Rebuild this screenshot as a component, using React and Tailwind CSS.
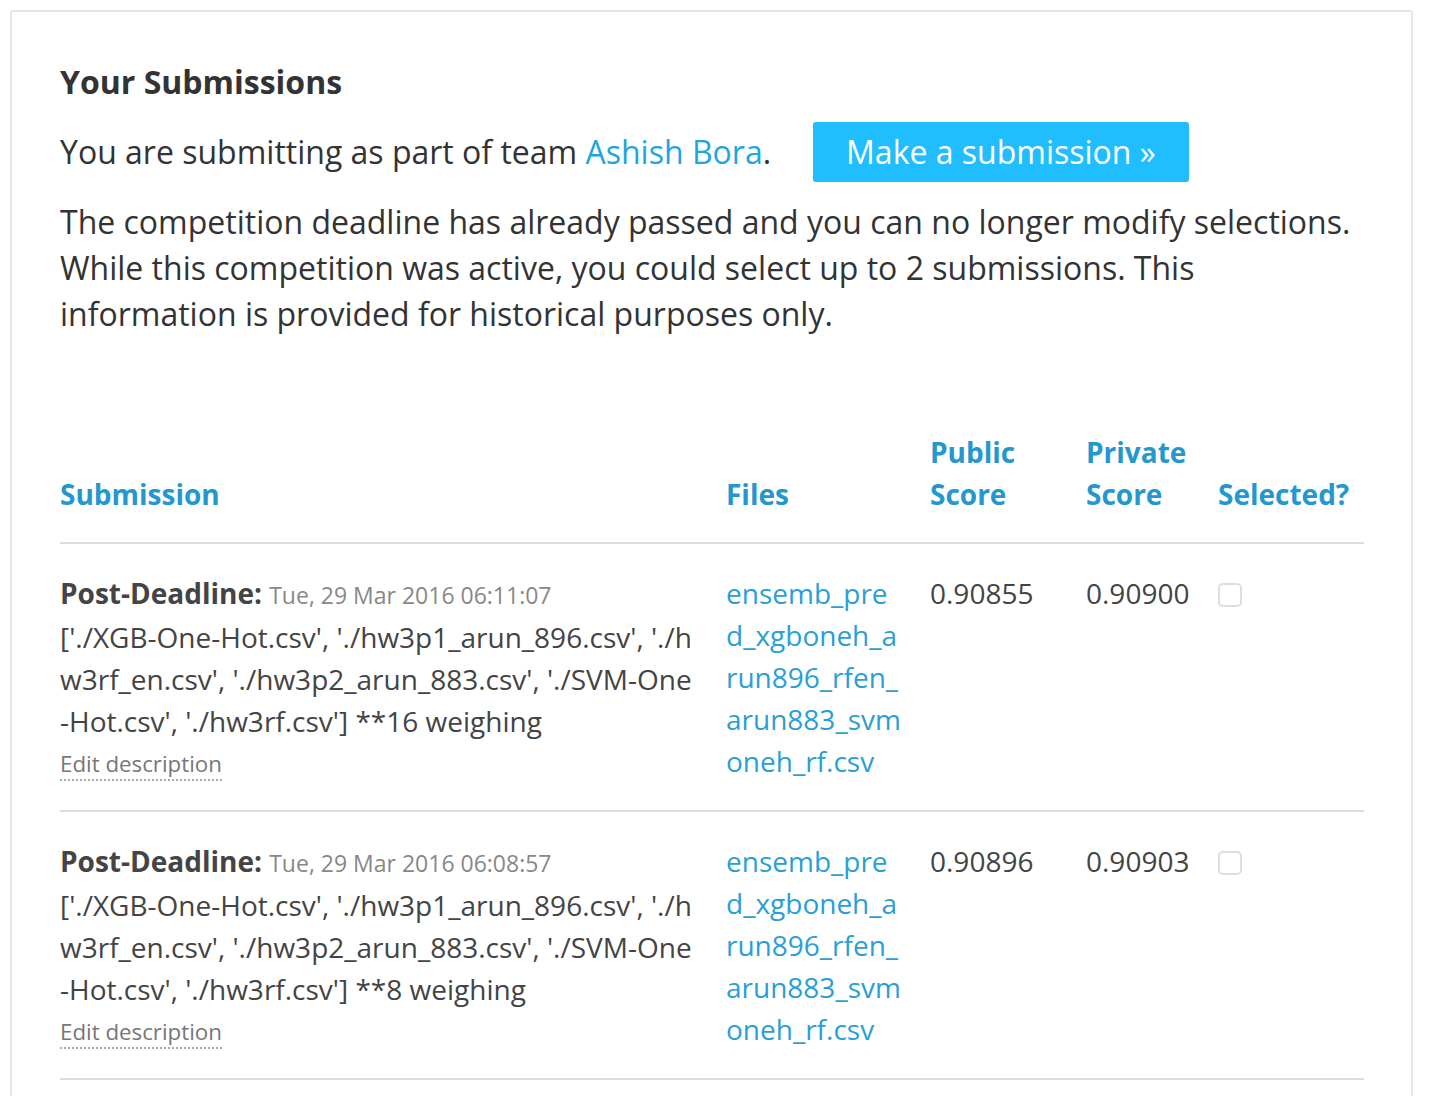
import React from 'react';

// Daftar submission (data statis dari screenshot)
const submissions = [
  {
    date: 'Tue, 29 Mar 2016 06:11:07',
    desc: "['./XGB-One-Hot.csv', './hw3p1_arun_896.csv', './hw3rf_en.csv', './hw3p2_arun_883.csv', './SVM-One-Hot.csv', './hw3rf.csv'] **16 weighing",
    file: 'ensemb_pred_xgboneh_arun896_rfen_arun883_svmoneh_rf.csv',
    pub: '0.90855',
    priv: '0.90900',
  },
  {
    date: 'Tue, 29 Mar 2016 06:08:57',
    desc: "['./XGB-One-Hot.csv', './hw3p1_arun_896.csv', './hw3rf_en.csv', './hw3p2_arun_883.csv', './SVM-One-Hot.csv', './hw3rf.csv'] **8 weighing",
    file: 'ensemb_pred_xgboneh_arun896_rfen_arun883_svmoneh_rf.csv',
    pub: '0.90896',
    priv: '0.90903',
  },
];

const cols = 'grid grid-cols-[666px_204px_156px_132px_146px]';

export default function App() {
  return (
    <div className="min-h-[1096px] bg-white pl-[10px] pt-[10px] font-['Open_Sans',sans-serif] text-[#333]">
      <div className="w-[1403px] min-h-[1200px] rounded-[3px] border-2 border-[#e6e6e6] pl-[48px] pr-[46px] pt-[50px]">
        <h2 className="text-[32px] font-bold leading-[40px] text-[#333]">Your Submissions</h2>

        <div className="mt-[20px] flex items-center">
          <p className="text-[32px] leading-[46px]">
            You are submitting as part of team{' '}
            <a className="text-[#1ea6e0]">Ashish Bora</a>.
          </p>
          <button className="ml-[42px] h-[60px] rounded-[3px] bg-[#20beff] px-[33px] text-[32px] leading-[60px] text-white">
            Make a submission »
          </button>
        </div>

        <p className="mt-[17px] whitespace-nowrap text-[32px] leading-[46px] text-[#333]">
          The competition deadline has already passed and you can no longer modify selections.
          <br />
          While this competition was active, you could select up to 2 submissions. This
          <br />
          information is provided for historical purposes only.
        </p>

        <div className="mt-[94px] w-[1304px]">
          <div className={`${cols} items-end border-b-2 border-[#dddddd] pb-[27px] text-[28px] font-bold leading-[42px] text-[#2597cf]`}>
            <div>Submission</div>
            <div>Files</div>
            <div className="pr-[20px]">Public Score</div>
            <div className="pr-[20px]">Private Score</div>
            <div>Selected?</div>
          </div>

          {submissions.map((s, i) => (
            <div
              key={i}
              className={`${cols} border-b-2 border-[#dddddd] pb-[28px] pt-[28px] text-[28px] leading-[42px]`}
            >
              <div className="break-all pr-[28px] text-[#444]">
                <span className="font-bold">Post-Deadline:</span>{' '}
                <span className="text-[23px] text-[#888]">{s.date}</span>
                <div>{s.desc}</div>
                <div className="-mt-[2px]">
                  <a className="border-b-2 border-dotted border-[#aaa] text-[22.3px] leading-[30px] text-[#777]">
                    Edit description
                  </a>
                </div>
              </div>
              <div className="break-all pr-[28px] text-[#2a9fd6]">{s.file}</div>
              <div className="text-[#444]">{s.pub}</div>
              <div className="text-[#444]">{s.priv}</div>
              <div className="pt-[11px]">
                <span className="block h-[24px] w-[24px] rounded-[5px] border-2 border-[#dedede] bg-white" />
              </div>
            </div>
          ))}
        </div>
      </div>
    </div>
  );
}
